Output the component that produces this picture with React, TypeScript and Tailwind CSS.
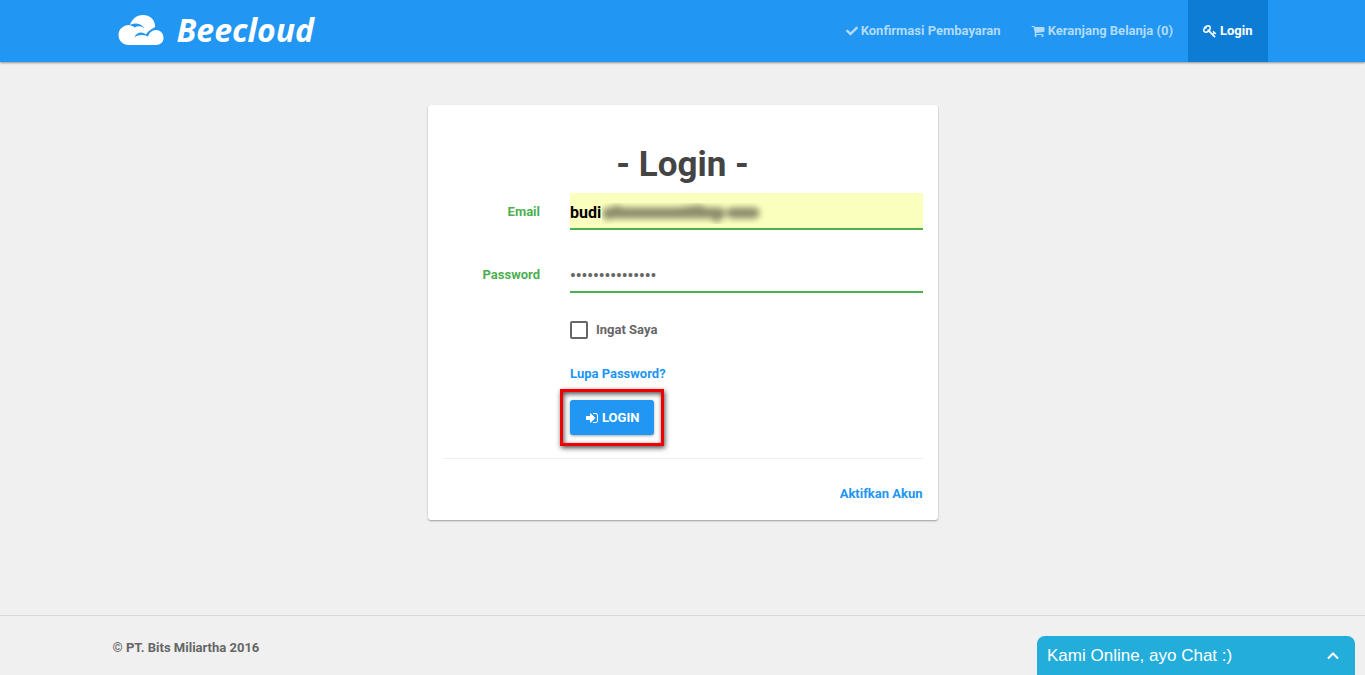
import { useState } from "react";
import { FaCheck } from "react-icons/fa";

interface NavItem {
  label: string;
  icon: "check" | "cart" | "key";
  active?: boolean;
}

const navItems: NavItem[] = [
  { label: "Konfirmasi Pembayaran", icon: "check" },
  { label: "Keranjang Belanja (0)", icon: "cart" },
  { label: "Login", icon: "key", active: true },
];

function KeyIcon() {
  return (
    <svg viewBox="0 0 1792 1792" className="h-[14px] w-[14px]" fill="currentColor" aria-hidden="true">
      <path d="M832 512q0-80-56-136t-136-56-136 56-56 136q0 42 19 83-41-19-83-19-80 0-136 56t-56 136 56 136 136 56 136-56 56-136q0-42-19-83 41 19 83 19 80 0 136-56t56-136zm851 704q0 17-49 66t-66 49q-9 0-28.500-16t-36.500-33-38.500-40-24.500-26l-96 96 220 220q28 28 28 68 0 42-39 81t-81 39q-40 0-68-28l-671-671q-176 131-365 131-163 0-265.500-102.500t-102.500-265.500q0-160 95-313t248-248 313-95q163 0 265.500 102.500t102.500 265.500q0 189-131 365l355 355 96-96q-3-3-26-24.500t-40-38.500-33-36.500-16-28.500q0-17 49-66t66-49q13 0 23 10 6 6 46 44.500t82 79.500 86.500 86 73 78 28.500 41z" />
    </svg>
  );
}

function CartIcon() {
  return (
    <svg viewBox="0 0 1792 1792" className="h-[14px] w-[14px]" fill="currentColor" aria-hidden="true">
      <path d="M704 1536q0 52-38 90t-90 38-90-38-38-90 38-90 90-38 90 38 38 90zm896 0q0 52-38 90t-90 38-90-38-38-90 38-90 90-38 90 38 38 90zm128-1088v512q0 24-16.500 42.500t-40.500 21.500l-1044 122q13 60 13 70 0 16-24 64h920q26 0 45 19t19 45-19 45-45 19h-1024q-26 0-45-19t-19-45q0-11 8-31.500t16-36 21.500-40 15.500-29.500l-177-823h-204q-26 0-45-19t-19-45 19-45 45-19h256q16 0 28.500 6.500t19.500 15.500 13 24.500 8 26 5.500 29.500 4.500 26h1201q26 0 45 19t19 45z" />
    </svg>
  );
}

function SignInIcon() {
  return (
    <svg viewBox="0 0 1792 1792" className="h-[14px] w-[14px]" fill="currentColor" aria-hidden="true">
      <path d="M1312 896q0 26-19 45l-544 544q-19 19-45 19t-45-19-19-45v-288h-448q-26 0-45-19t-19-45v-384q0-26 19-45t45-19h448v-288q0-26 19-45t45-19 45 19l544 544q19 19 19 45zm352-352v704q0 119-84.500 203.500t-203.500 84.500h-320q-13 0-22.500-9.500t-9.500-22.500q-1-4-1-20t-.5-26.500 3-23.500 10-19.500 20.500-6.500h320q66 0 113-47t47-113v-704q0-66-47-113t-113-47h-312l-11.500-1-11.500-3-8-5.500-7-9-2-13.500q-1-4-1-20t-.5-26.500 3-23.500 10-19.500 20.500-6.500h320q119 0 203.500 84.500t84.500 203.500z" />
    </svg>
  );
}

function NavIcon({ icon }: { icon: NavItem["icon"] }) {
  if (icon === "check") return <FaCheck className="h-3 w-3" />;
  if (icon === "cart") return <CartIcon />;
  return <KeyIcon />;
}

function Logo() {
  return (
    <a href="#" className="flex items-center gap-[13px] pb-[2px] pl-[5px] text-white">
      <svg viewBox="0 0 46 32" className="h-8 w-[46px]" aria-hidden="true">
        <path
          d="M11 31 C4.500 31 0.500 26.500 0.500 21 C0.500 15 5.500 10.500 12 11 C14 5 18.500 1 25 1 C32 1 36.500 5.500 37 11.500 C37.300 13.500 37 15 36.500 16 C42 15.500 45.500 19 45.500 24 C45.500 28 42.500 31 38 31 Z"
          fill="currentColor"
        />
        <path
          d="M11.500 11.500 C14 9 22 8 26.500 14 C22.500 11.500 19.500 12 16.500 13.500 C15 12 13.500 11.500 11.500 11.500 Z M16.500 23.500 C18.500 17.500 25.500 16.500 30 22.500 C25 20.500 20.500 20.500 16.500 23.500 Z M28 20.500 C30.500 16.500 33 15.500 38 12.500 L37 16 C33.500 16.500 31 19 30 22.500 Z"
          fill="#2196f3"
        />
      </svg>
      <span className="font-['Noto_Sans'] text-[32px] leading-8 font-bold italic">Beecloud</span>
    </a>
  );
}

function Header() {
  return (
    <header className="bg-[#2196f3] shadow-[0_1px_2px_rgba(0,0,0,0.4)]">
      <div className="mx-auto flex h-[62px] max-w-[1170px] items-center justify-between pl-[15px]">
        <Logo />
        <nav className="flex h-full">
          {navItems.map((item) => (
            <a
              key={item.label}
              href="#"
              className={
                item.active
                  ? "flex items-center gap-[3px] bg-[#0c7cd5] px-[15px] text-white"
                  : "flex items-center gap-[3px] px-[15px] text-[#b2dbfb] hover:text-white"
              }
            >
              <NavIcon icon={item.icon} />
              {item.label}
            </a>
          ))}
        </nav>
      </div>
    </header>
  );
}

// soft smudge that hides the rest of the address
function Smudge() {
  return (
    <svg viewBox="0 0 170 37" className="pointer-events-none absolute top-0 left-[47px] h-[37px] w-[170px]" aria-hidden="true">
      <defs>
        <filter id="smudge" x="-20%" y="-100%" width="140%" height="300%">
          <feGaussianBlur stdDeviation="3" />
        </filter>
      </defs>
      <g filter="url(#smudge)" stroke="#8c8c6c" strokeLinecap="round" fill="none">
        <path d="M6 20 H118" strokeWidth="11" />
        <path d="M130 20 H152" strokeWidth="11" />
        <path d="M6 22 L15 17 M80 19 L98 17 M112 20 L115 24" strokeWidth="10" />
      </g>
    </svg>
  );
}

function LoginCard() {
  const [email, setEmail] = useState("budi");
  const [password, setPassword] = useState("abcdefghijklmno");
  const [remember, setRemember] = useState(false);

  return (
    <section className="w-full max-w-[510px] rounded-[3px] bg-white pt-10 pb-4 shadow-[0_1px_2px_rgba(0,0,0,0.35)]">
      <h1 className="mb-2 text-center text-[35px] leading-10 font-bold text-[#444444]">- Login -</h1>
      <form onSubmit={(e) => e.preventDefault()}>
        <div className="mb-[26px] flex items-center">
          <label htmlFor="email" className="w-1/4 px-[15px] text-right text-[#4caf50]">
            Email
          </label>
          <div className="relative w-3/4 px-[15px]">
            <input
              id="email"
              type="text"
              value={email}
              onChange={(e) => setEmail(e.target.value)}
              className="block h-[37px] w-full border-b-2 border-[#4caf50] bg-[#faffbd] pt-[3px] text-base text-black outline-none"
            />
            {email === "budi" && <Smudge />}
          </div>
        </div>
        <div className="mb-[27px] flex items-center">
          <label htmlFor="password" className="w-1/4 px-[15px] text-right text-[#4caf50]">
            Password
          </label>
          <div className="w-3/4 px-[15px]">
            <input
              id="password"
              type="password"
              value={password}
              onChange={(e) => setPassword(e.target.value)}
              className="block h-[37px] w-full border-b-2 border-[#4caf50] bg-white pt-[3px] text-base text-[#666666] outline-none"
            />
          </div>
        </div>
        <div className="ml-[25%] flex flex-col items-start px-[15px]">
          <label className="mb-6 flex items-center gap-2">
            <input
              type="checkbox"
              checked={remember}
              onChange={(e) => setRemember(e.target.checked)}
              className="h-[18px] w-[18px] appearance-none rounded-xs border-2 border-[#666666] checked:border-[#2196f3] checked:bg-[#2196f3]"
            />
            Ingat Saya
          </label>
          <a href="#" className="mb-4 text-[#2196f3]">
            Lupa Password?
          </a>
          <div className="relative">
            <button
              type="submit"
              className="flex h-[35px] items-center gap-[3px] rounded-[3px] bg-[#2196f3] px-[15px] text-white shadow-[0_1px_3px_rgba(0,0,0,0.35)]"
            >
              <SignInIcon />
              LOGIN
            </button>
            <span className="pointer-events-none absolute -inset-x-[10px] -top-[11px] -bottom-[11px] border-3 border-[#f00000] shadow-[1px_2px_5px_rgba(0,0,0,0.7),inset_1px_2px_5px_rgba(0,0,0,0.7)]" />
          </div>
        </div>
      </form>
      <hr className="mx-[15px] mt-[23px] mb-[25px] border-[#eeeeee]" />
      <div className="px-[15px] text-right">
        <a href="#" className="text-[#2196f3]">
          Aktifkan Akun
        </a>
      </div>
    </section>
  );
}

export default function App() {
  return (
    <div className="flex min-h-screen flex-col bg-[#f0f0f0] font-[Roboto,sans-serif] text-[13px] leading-5 font-bold text-[#666666]">
      <Header />
      <main className="flex grow items-start justify-center px-4 pt-[43px] pb-10">
        <LoginCard />
      </main>
      <footer className="border-t border-[#d8d8d8]">
        <div className="mx-auto max-w-[1170px] px-[15px] pt-[22px] pb-[17px]">© PT. Bits Miliartha 2016</div>
      </footer>
      <button
        type="button"
        className="fixed right-[10px] bottom-0 flex h-[39px] w-[318px] items-center justify-between rounded-t-lg bg-[#23addb] pr-4 pl-[10px] font-['Liberation_Sans',sans-serif] text-[17px] font-normal text-white"
      >
        Kami Online, ayo Chat :)
        <svg viewBox="0 0 12 8" className="h-2 w-3" fill="none" stroke="currentColor" strokeWidth="2" aria-hidden="true">
          <path d="M1 6.500 L6 1.500 L11 6.500" />
        </svg>
      </button>
    </div>
  );
}
